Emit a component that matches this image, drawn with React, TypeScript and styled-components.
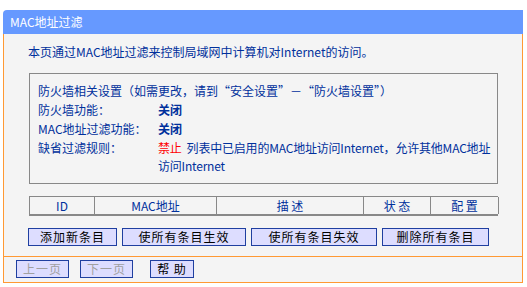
import styled, { createGlobalStyle } from "styled-components";

const GlobalStyle = createGlobalStyle`
    body {
        margin: 0;
        background: #ffffff;
        font-family: "Noto Sans CJK SC", "Liberation Sans", sans-serif;
        font-size: 12px;
    }
`;

const Page = styled.div`
    padding: 10px 0 0 3px;
    width: 520px;
`;

const TitleBar = styled.div`
    height: 24px;
    line-height: 24px;
    background: #6699ff;
    border-radius: 4px 0 0 0;
    color: #ffffff;
    padding-left: 7px;
    font-size: 12px;
`;

const Body = styled.div`
    background: #f4f4f4;
    border-left: 1px solid #ff9933;
    border-right: 1px solid #ff9933;
    border-bottom: 1px solid #ff9933;
`;

const Content = styled.div`
    padding: 9px 0 10px 24px;
    border-bottom: 1px solid #ff9933;
`;

const Intro = styled.div`
    line-height: 18px;
    color: #00309c;
`;

const InfoBox = styled.div`
    margin: 12px 0 0 1px;
    width: 459px;
    height: 101px;
    border: 1px solid #888888;
    padding: 8px 0 0 8px;
    box-sizing: content-box;
    display: flex;
    flex-direction: column;
    gap: 1px;
    color: #00309c;
`;

const InfoRow = styled.div`
    display: flex;
    line-height: 18px;
    white-space: nowrap;
`;

const Label = styled.div`
    width: 120px;
    flex-shrink: 0;
`;

const Value = styled.div<{ $bold?: boolean; $tight?: boolean }>`
    font-weight: ${(p) => (p.$bold ? 700 : 400)};
    letter-spacing: ${(p) => (p.$tight ? "-0.2px" : "normal")};
    flex: 1;
`;

const Red = styled.span`
    color: #ff0000;
    margin-right: 5px;
`;

const HeaderTable = styled.div`
    margin: 12px 0 0 1px;
    width: 469px;
    display: grid;
    grid-template-columns: 65px 122px 147px 67px 68px;
    border-top: 1px solid #888888;
    border-left: 1px solid #888888;
    border-bottom: 2px solid #888888;
    box-sizing: border-box;
`;

const HeadCell = styled.div`
    height: 16px;
    line-height: 16px;
    text-align: center;
    color: #00309c;
    border-right: 1px solid #888888;
    padding-top: 1px;
`;

const ButtonRow = styled.div<{ $gap: number }>`
    display: flex;
    gap: ${(p) => p.$gap}px;
`;

const ActionRow = styled(ButtonRow)`
    margin-top: 12px;
`;

const Btn = styled.div<{ $w: number; $disabled?: boolean }>`
    width: ${(p) => p.$w}px;
    height: 18px;
    box-sizing: border-box;
    border: 1px solid #1f3fa0;
    background: #ddddff;
    color: ${(p) => (p.$disabled ? "#a0a0a0" : "#000000")};
    font-size: 12px;
    line-height: 16px;
    text-align: center;
    letter-spacing: 1px;
`;

const Footer = styled.div`
    padding: 3px 0 4px 12px;
`;

const FooterRow = styled.div`
    display: flex;
    align-items: center;
`;

const Spacer = styled.div<{ $w: number }>`
    width: ${(p) => p.$w}px;
`;

const COLUMNS = ["ID", "MAC地址", "描 述", "状 态", "配 置"];

const ACTIONS = [
    { label: "添加新条目", width: 89 },
    { label: "使所有条目生效", width: 124 },
    { label: "使所有条目失效", width: 126 },
    { label: "删除所有条目", width: 107 },
];

export default function App() {
    return (
        <>
            <GlobalStyle />
            <Page>
                <TitleBar>MAC地址过滤</TitleBar>
                <Body>
                    <Content>
                        <Intro>本页通过MAC地址过滤来控制局域网中计算机对Internet的访问。</Intro>
                        <InfoBox>
                            <InfoRow>
                                <Value>防火墙相关设置（如需更改，请到“安全设置”－“防火墙设置”）</Value>
                            </InfoRow>
                            <InfoRow>
                                <Label>防火墙功能：</Label>
                                <Value $bold>关闭</Value>
                            </InfoRow>
                            <InfoRow>
                                <Label>MAC地址过滤功能：</Label>
                                <Value $bold>关闭</Value>
                            </InfoRow>
                            <InfoRow>
                                <Label>缺省过滤规则：</Label>
                                <Value $tight>
                                    <Red>禁止</Red>列表中已启用的MAC地址访问Internet，允许其他MAC地址
                                    <br />
                                    访问Internet
                                </Value>
                            </InfoRow>
                        </InfoBox>
                        <HeaderTable>
                            {COLUMNS.map((c) => (
                                <HeadCell key={c}>{c}</HeadCell>
                            ))}
                        </HeaderTable>
                        <ActionRow $gap={5}>
                            {ACTIONS.map((a) => (
                                <Btn key={a.label} $w={a.width}>
                                    {a.label}
                                </Btn>
                            ))}
                        </ActionRow>
                    </Content>
                    <Footer>
                        <FooterRow>
                            <Btn $w={53} $disabled>上一页</Btn>
                            <Spacer $w={11} />
                            <Btn $w={53} $disabled>下一页</Btn>
                            <Spacer $w={17} />
                            <Btn $w={44}>帮 助</Btn>
                        </FooterRow>
                    </Footer>
                </Body>
            </Page>
        </>
    );
}
